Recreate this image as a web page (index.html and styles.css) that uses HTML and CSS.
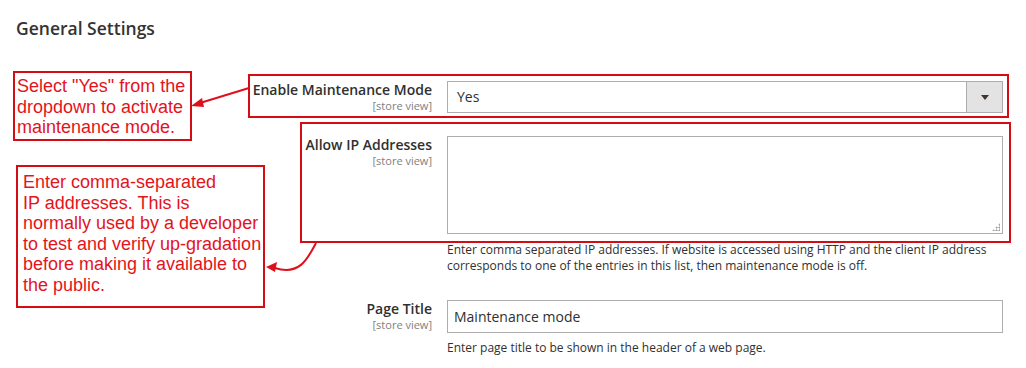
FILE: index.html
```html
<!DOCTYPE html>
<html lang="en">
<head>
  <meta charset="UTF-8">
  <title>General Settings</title>
  <link rel="stylesheet" href="styles.css">
</head>
<body>
  <div class="page">
    <h2 class="section-title">General Settings</h2>

    <div class="fields">
      <div class="field">
        <div class="label">
          <span class="label-text">Enable Maintenance Mode</span>
          <span class="scope">[store view]</span>
        </div>
        <div class="control">
          <div class="select">
            <span class="select-value">Yes</span>
            <span class="select-btn"><span class="caret"></span></span>
          </div>
        </div>
      </div>

      <div class="field">
        <div class="label">
          <span class="label-text">Allow IP Addresses</span>
          <span class="scope">[store view]</span>
        </div>
        <div class="control">
          <div class="textarea-wrap">
            <textarea class="textarea"></textarea>
            <span class="grip"></span>
          </div>
          <p class="note">Enter comma separated IP addresses. If website is accessed using HTTP and the client IP address corresponds to one of the entries in this list, then maintenance mode is off.</p>
        </div>
      </div>

      <div class="field">
        <div class="label">
          <span class="label-text">Page Title</span>
          <span class="scope">[store view]</span>
        </div>
        <div class="control">
          <input class="input" type="text" value="Maintenance mode">
          <p class="note">Enter page title to be shown in the header of a web page.</p>
        </div>
      </div>
    </div>

    <!-- annotations drawn over the screenshot -->
    <div class="frame frame-mode"></div>
    <div class="frame frame-ip"></div>

    <div class="callout callout-mode">Select "Yes" from the<br>dropdown to activate<br>maintenance mode.</div>
    <div class="callout callout-ip">Enter comma-separated<br>IP addresses. This is<br>normally used by a developer<br>to test and verify up-gradation<br>before making it available to<br>the public.</div>

    <svg class="arrows" width="1026" height="368" viewBox="0 0 1026 368">
      <line x1="249" y1="88" x2="200" y2="103" stroke="#e0101a" stroke-width="2"/>
      <polygon points="191,106 202,98 204,107" fill="#e0101a"/>
      <path d="M316 243 C 308 258, 300 276, 275 268" fill="none" stroke="#e0101a" stroke-width="2"/>
      <polygon points="266,267 277,262 275,272" fill="#e0101a"/>
    </svg>
  </div>
</body>
</html>
```

FILE: styles.css
```css
body {
  margin: 0;
  font-family: "Open Sans", "Liberation Sans", Arial, sans-serif;
  color: #303030;
  background: #fff;
}

.page {
  position: relative;
  width: 1026px;
  height: 368px;
  overflow: hidden;
}

.section-title {
  margin: 0;
  padding: 18px 0 0 16px;
  font-size: 17.5px;
  line-height: 20px;
  font-weight: 600;
  color: #333;
}

.fields {
  display: flex;
  flex-direction: column;
  gap: 23px;
  margin-top: 43px;
}

.field {
  display: grid;
  grid-template-columns: 416px 556px;
  column-gap: 15px;
  padding-left: 16px;
}

.label {
  display: flex;
  flex-direction: column;
  align-items: flex-end;
}

.label-text {
  font-size: 14px;
  line-height: 18px;
  font-weight: 600;
  color: #303030;
}

.scope {
  font-size: 11px;
  line-height: 14px;
  color: #808080;
}

.select {
  display: flex;
  height: 32px;
  box-sizing: border-box;
  border: 1px solid #adadad;
  background: #fff;
}

.select-value {
  flex: 1;
  padding-left: 9px;
  font-size: 14px;
  line-height: 30px;
  color: #303030;
}

.select-btn {
  width: 35px;
  border-left: 1px solid #adadad;
  background: #e3e3e3;
  display: flex;
  align-items: center;
  justify-content: center;
}

.caret {
  width: 0;
  height: 0;
  border-left: 4px solid transparent;
  border-right: 4px solid transparent;
  border-top: 5px solid #41362f;
}

.textarea-wrap {
  position: relative;
  height: 98px;
}

.textarea {
  display: block;
  width: 100%;
  height: 98px;
  box-sizing: border-box;
  border: 1px solid #adadad;
  resize: none;
  margin: 0;
  font-family: inherit;
}

.grip {
  position: absolute;
  right: 3px;
  bottom: 3px;
  width: 8px;
  height: 8px;
  background:
    radial-gradient(circle, #a0a0a0 0.9px, transparent 1.2px) 0 0 / 3px 3px;
  clip-path: polygon(100% 0, 100% 100%, 0 100%);
}

.input {
  display: block;
  width: 100%;
  height: 33px;
  box-sizing: border-box;
  border: 1px solid #adadad;
  margin: 0;
  padding: 0 6px;
  font-family: inherit;
  font-size: 14px;
  color: #303030;
}

.note {
  margin: 8px 0 3px;
  font-size: 12px;
  line-height: 16px;
  color: #303030;
}

.field:last-child .note {
  margin: 7px 0 0;
}

.frame {
  position: absolute;
  border: 2px solid #d40c14;
  box-sizing: border-box;
}

.frame-mode {
  left: 248px;
  top: 74px;
  width: 761px;
  height: 44px;
}

.frame-ip {
  left: 300px;
  top: 122px;
  width: 711px;
  height: 121px;
}

.callout {
  position: absolute;
  box-sizing: border-box;
  border: 2px solid #d40c14;
  background: #fff;
  font-family: "Liberation Sans", Arial, sans-serif;
  font-size: 18px;
  line-height: 20.6px;
  color: #e5131b;
}

.callout-mode {
  left: 13px;
  top: 71px;
  width: 179px;
  height: 70px;
  padding: 3px 0 0 2px;
}

.callout-ip {
  left: 16px;
  top: 165px;
  width: 249px;
  height: 143px;
  padding: 5px 0 0 5px;
}

.arrows {
  position: absolute;
  left: 0;
  top: 0;
  pointer-events: none;
}
```
